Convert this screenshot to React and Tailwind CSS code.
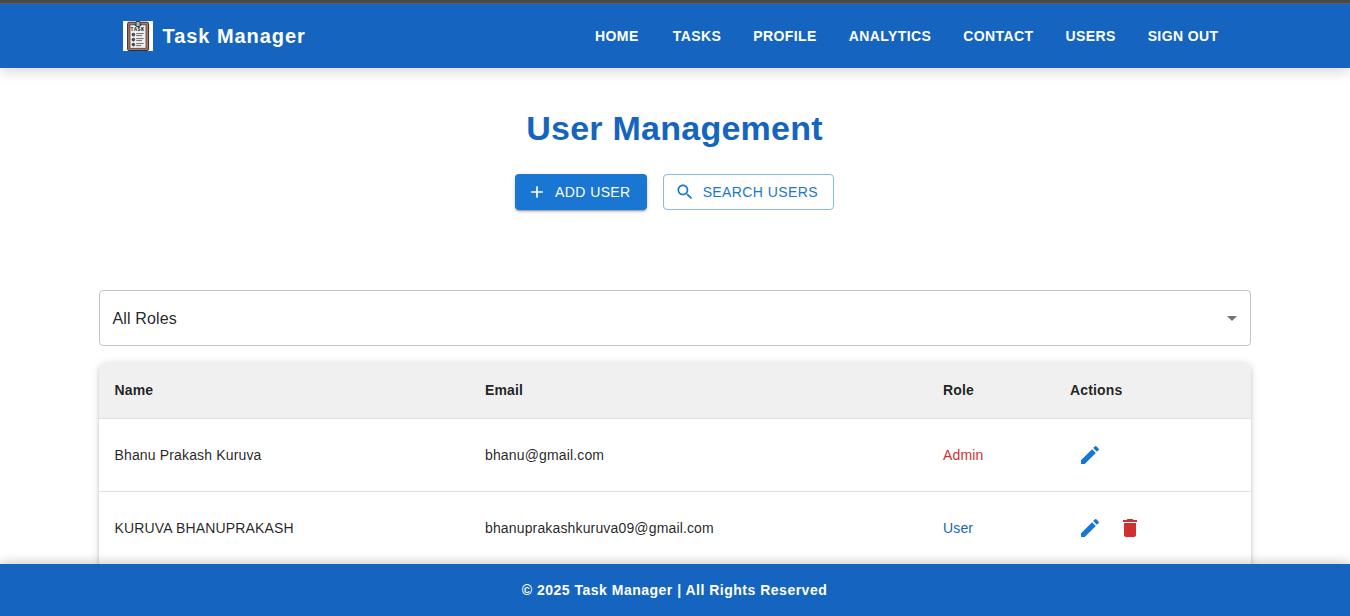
import React from "react";

const NAV = ["HOME", "TASKS", "PROFILE", "ANALYTICS", "CONTACT", "USERS", "SIGN OUT"];

const USERS = [
  { name: "Bhanu Prakash Kuruva", email: "bhanu@gmail.com", role: "Admin" },
  { name: "KURUVA BHANUPRAKASH", email: "bhanuprakashkuruva09@gmail.com", role: "User" },
];

const ICONS = {
  add: "M19 13h-6v6h-2v-6H5v-2h6V5h2v6h6z",
  search:
    "M15.5 14h-.79l-.28-.27C15.41 12.59 16 11.11 16 9.5 16 5.91 13.09 3 9.5 3S3 5.91 3 9.5 5.91 16 9.5 16c1.61 0 3.09-.59 4.23-1.57l.27.28v.79l5 4.99L20.49 19zm-6 0C7.01 14 5 11.99 5 9.5S7.01 5 9.5 5 14 7.01 14 9.5 11.99 14 9.5 14",
  edit: "M3 17.25V21h3.75L17.81 9.94l-3.75-3.75zM20.71 7.04c.39-.39.39-1.02 0-1.41l-2.34-2.34a.9959.9959 0 0 0-1.41 0l-1.83 1.83 3.75 3.75z",
  trash: "M6 19c0 1.1.9 2 2 2h8c1.1 0 2-.9 2-2V7H6zM19 4h-3.5l-1-1h-5l-1 1H5v2h14z",
  arrow: "m7 10 5 5 5-5z",
};

function Icon({ name, className }) {
  return (
    <svg viewBox="0 0 24 24" fill="currentColor" className={className} aria-hidden="true">
      <path d={ICONS[name]} />
    </svg>
  );
}

function Logo() {
  return (
    <div className="relative h-[30px] w-[30px] bg-white">
      <svg viewBox="0 0 30 30" className="h-[30px] w-[30px]" aria-hidden="true">
        <rect x="4.6" y="1.2" width="21" height="28.3" rx="1.5" fill="#a97864" stroke="#352b2b" />
        <rect x="7" y="3.8" width="16" height="23.5" fill="#f0f0ee" stroke="#4b4040" strokeWidth=".8" />
        <path d="M11.8 3h6.4v2h-6.4z" fill="#4a4d55" />
        <rect x="13" y="0.5" width="4" height="5" rx="1" fill="#a9c3cc" stroke="#262b33" />
        <g fill="#5a5a65" stroke="#25252e" strokeWidth=".9">
          <circle cx="10.4" cy="13.6" r="1.3" />
          <circle cx="10.4" cy="18.6" r="1.3" />
          <circle cx="10.4" cy="23.6" r="1.3" />
        </g>
        <path
          d="M13.2 12.6h7.5M13.2 14.6h5.8M13.2 17.6h7.5M13.2 19.6h5.8M13.2 22.6h7.5M13.2 24.6h5"
          stroke="#6a6a6e"
          strokeWidth="1"
        />
      </svg>
      <span className="absolute left-[8px] top-[7px] font-['Liberation_Mono'] text-[5px] font-bold leading-[5px] tracking-[0.5px] text-[#111]">
        TASK
      </span>
    </div>
  );
}

function Header() {
  return (
    <header className="relative z-10 h-[68px] shrink-0 border-t-[3px] border-[#4a4a4a] bg-[#1565c0] shadow-[0_4px_12px_rgba(0,0,0,0.15)]">
      <div className="h-px bg-[#5b5f66]" />
      <div className="flex h-16 items-center justify-between pl-[122.5px] pr-[123.5px]">
        <div className="flex items-center gap-[10px]">
          <Logo />
          <span className="text-[20px] font-bold leading-8 tracking-[0.95px] text-white">Task Manager</span>
        </div>
        <nav className="flex gap-4">
          {NAV.map((item) => (
            <button
              key={item}
              className="min-w-16 px-2 py-1.5 text-sm font-bold leading-[24.5px] tracking-[0.4px] text-white"
            >
              {item}
            </button>
          ))}
        </nav>
      </div>
    </header>
  );
}

function UserTable() {
  return (
    <div className="mt-4 overflow-hidden rounded-lg bg-white pb-10 shadow-[0_3px_3px_-2px_rgba(0,0,0,0.2),0_3px_4px_0_rgba(0,0,0,0.14),0_1px_8px_0_rgba(0,0,0,0.12)]">
      <table className="w-full table-fixed border-collapse text-left text-sm leading-6 tracking-[0.15px] text-black/87">
        <colgroup>
          <col className="w-[370.5px]" />
          <col className="w-[458px]" />
          <col className="w-[127px]" />
          <col />
        </colgroup>
        <thead>
          <tr className="h-[56px] border-b border-[#e0e0e0] bg-[#f0f0f0]">
            {["Name", "Email", "Role", "Actions"].map((h) => (
              <th key={h} className="px-4 font-bold">
                {h}
              </th>
            ))}
          </tr>
        </thead>
        <tbody>
          {USERS.map((u) => (
            <tr key={u.email} className="h-[73px] border-b border-[#e0e0e0]">
              <td className="px-4">{u.name}</td>
              <td className="px-4">{u.email}</td>
              <td className={u.role === "Admin" ? "px-4 text-[#d32f2f]" : "px-4 text-[#1565c0]"}>{u.role}</td>
              <td className="px-4">
                <div className="flex">
                  <button className="p-2 text-[#1976d2]">
                    <Icon name="edit" className="h-6 w-6" />
                  </button>
                  {u.role !== "Admin" && (
                    <button className="p-2 text-[#d32f2f]">
                      <Icon name="trash" className="h-6 w-6" />
                    </button>
                  )}
                </div>
              </td>
            </tr>
          ))}
        </tbody>
      </table>
    </div>
  );
}

export default function App() {
  return (
    <div className="flex h-[616px] flex-col overflow-hidden bg-white font-['Liberation_Sans',Arial,sans-serif]">
      <Header />
      <main className="min-h-0 flex-1 overflow-hidden pl-[98.5px] pr-[99.5px] pt-[39px]">
        <h1 className="text-center text-[34px] font-bold leading-[42px] tracking-[0.25px] text-[#1565c0]">
          User Management
        </h1>
        <div className="mt-[25px] flex justify-center gap-4 text-sm leading-[24.5px] tracking-[0.4px]">
          <button className="flex h-9 items-center gap-2 rounded-[4px] bg-[#1976d2] pl-3 pr-4 text-white shadow-[0_3px_1px_-2px_rgba(0,0,0,0.2),0_2px_2px_0_rgba(0,0,0,0.14),0_1px_5px_0_rgba(0,0,0,0.12)]">
            <Icon name="add" className="h-5 w-5" />
            ADD USER
          </button>
          <button className="flex h-9 items-center gap-2 rounded-[4px] border border-[#1976d2]/50 pl-[11px] pr-[15px] text-[#1976d2]">
            <Icon name="search" className="h-5 w-5" />
            SEARCH USERS
          </button>
        </div>
        <div className="mt-20 flex h-14 items-center justify-between rounded-[4px] border border-black/23 pl-[13px] pr-1.5 text-base tracking-[0.15px] text-black/87">
          <span className="pt-px leading-[23px]">All Roles</span>
          <Icon name="arrow" className="h-6 w-6 text-black/54" />
        </div>
        <UserTable />
      </main>
      <footer className="relative z-10 flex h-[52px] shrink-0 items-center justify-center bg-[#1565c0] pr-px text-sm font-bold tracking-[0.5px] text-white shadow-[0_-2px_10px_rgba(0,0,0,0.2)]">
        © 2025 Task Manager | All Rights Reserved
      </footer>
    </div>
  );
}
